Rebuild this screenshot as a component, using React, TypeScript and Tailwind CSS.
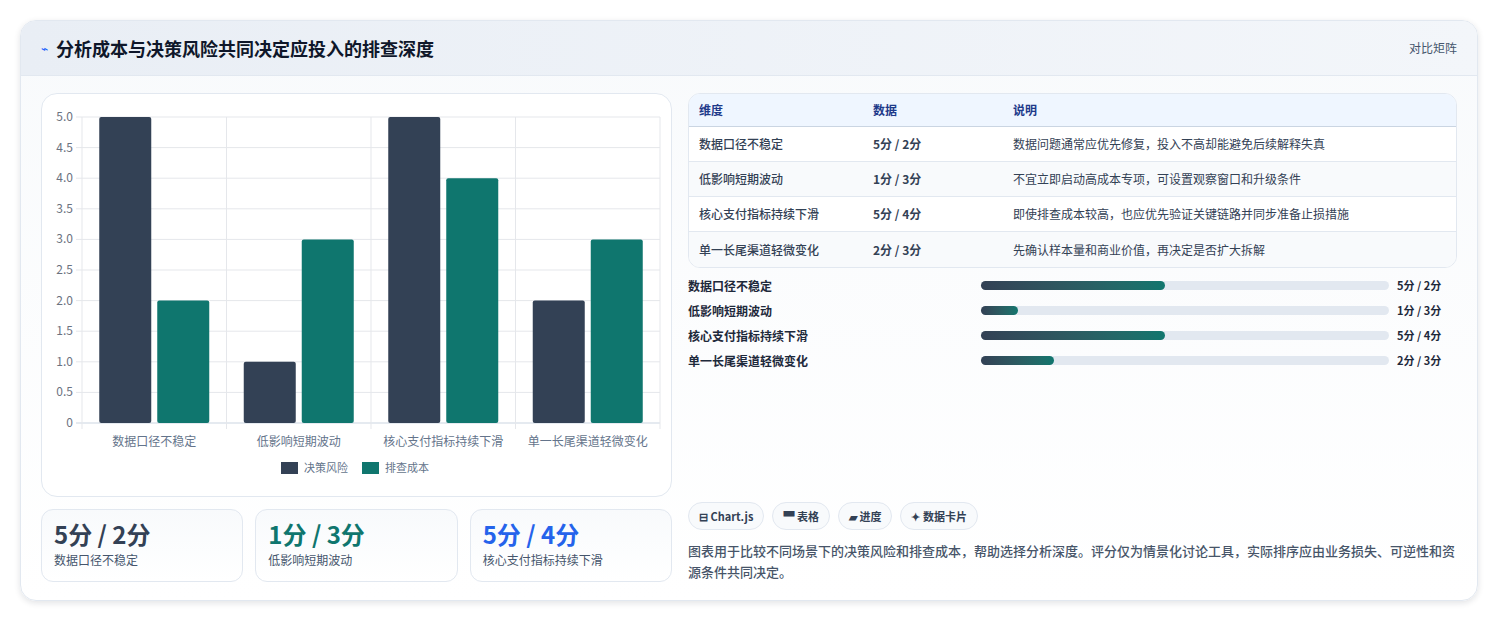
import React from "react";

const cats = ["数据口径不稳定", "低影响短期波动", "核心支付指标持续下滑", "单一长尾渠道轻微变化"];
const risk = [5, 1, 5, 2];
const cost = [2, 3, 4, 3];
const rows = [
  ["数据口径不稳定", "5分 / 2分", "数据问题通常应优先修复，投入不高却能避免后续解释失真"],
  ["低影响短期波动", "1分 / 3分", "不宜立即启动高成本专项，可设置观察窗口和升级条件"],
  ["核心支付指标持续下滑", "5分 / 4分", "即使排查成本较高，也应优先验证关键链路并同步准备止损措施"],
  ["单一长尾渠道轻微变化", "2分 / 3分", "先确认样本量和商业价值，再决定是否扩大拆解"],
];
const prog = [45, 9, 45, 18];

function Chart() {
  const L = 40, R = 618, T = 23, B = 329;
  const h = B - T;
  const cw = (R - L) / 4;
  const y = (v: number) => B - (v / 5) * h;
  return (
    <svg width="631" height="403" className="block" style={{ fontFamily: "'Noto Sans CJK SC', sans-serif" }}>
      {Array.from({ length: 11 }).map((_, i) => {
        const v = i * 0.5;
        return (
          <g key={i}>
            <line x1={L - 6} x2={R} y1={y(v)} y2={y(v)} stroke={i === 0 ? "#cbd5e1" : "#e5e7eb"} />
            <text x={L - 9} y={y(v) + 4} textAnchor="end" fontSize="12" fill="#6b7280">{i === 0 ? "0" : v.toFixed(1)}</text>
          </g>
        );
      })}
      {[0, 1, 2, 3, 4].map((i) => (
        <line key={i} x1={L + i * cw} x2={L + i * cw} y1={T} y2={B + 6} stroke="#e5e7eb" />
      ))}
      {cats.map((c, i) => {
        const cx = L + cw * i + cw / 2;
        return (
          <g key={c}>
            <rect x={cx - 55} y={y(risk[i])} width="52" height={B - y(risk[i])} rx="2" fill="#334155" />
            <rect x={cx + 3} y={y(cost[i])} width="52" height={B - y(cost[i])} rx="2" fill="#0f766e" />
            <text x={cx} y={B + 23} textAnchor="middle" fontSize="12" fill="#64748b">{c}</text>
          </g>
        );
      })}
      <rect x="239" y="368" width="17" height="12" fill="#334155" />
      <text x="262" y="378" fontSize="11" fill="#64748b">决策风险</text>
      <rect x="320" y="368" width="17" height="12" fill="#0f766e" />
      <text x="343" y="378" fontSize="11" fill="#64748b">排查成本</text>
    </svg>
  );
}

export default function App() {
  return (
    <div className="min-h-[621px] bg-white p-5 pb-5" style={{ fontFamily: "'Noto Sans CJK SC', 'Noto Sans', sans-serif" }}>
      <div className="rounded-2xl border border-slate-200 bg-gradient-to-b from-[#f8fafc] to-white shadow-[0_2px_6px_rgba(15,23,42,0.12)] overflow-hidden">
        <div className="h-[55px] flex items-center justify-between px-5 bg-gradient-to-r from-[#e9eef5] to-[#f3f6fa] border-b border-slate-200">
          <div className="flex items-center gap-2">
            <span className="text-blue-600 text-xs">⌁</span>
            <span className="text-[18px] font-bold text-[#0f172a]">分析成本与决策风险共同决定应投入的排查深度</span>
          </div>
          <span className="text-xs text-slate-600">对比矩阵</span>
        </div>
        <div className="flex gap-4 px-5 pt-[17px] pb-[18px]">
          <div className="w-[631px] flex flex-col gap-3">
            <div className="h-[404px] rounded-2xl border border-slate-200 bg-white"><Chart /></div>
            <div className="grid grid-cols-3 gap-3">
              {[["5分 / 2分", "数据口径不稳定", "text-[#334155]"], ["1分 / 3分", "低影响短期波动", "text-[#0f766e]"], ["5分 / 4分", "核心支付指标持续下滑", "text-[#2563eb]"]].map(([v, l, c]) => (
                <div key={l} className="h-[73px] rounded-xl border border-slate-200 bg-gradient-to-b from-[#f8fafc] to-white px-3 pt-2">
                  <div className={`text-[24px] font-bold leading-8 ${c}`}>{v}</div>
                  <div className="text-xs text-slate-600 mt-0.5">{l}</div>
                </div>
              ))}
            </div>
          </div>
          <div className="flex-1 flex flex-col">
            <div className="rounded-xl border border-slate-200 overflow-hidden bg-white text-xs">
              <div className="flex h-[33px] items-center bg-[#eff6ff] border-b border-slate-300 text-[#1e3a8a] font-semibold">
                <div className="w-[184px] pl-[10px]">维度</div><div className="w-[140px]">数据</div><div>说明</div>
              </div>
              {rows.map((r, i) => (
                <div key={i} className={`flex h-[35px] items-center text-[#334155] ${i < 3 ? "border-b border-slate-200" : ""} ${i % 2 ? "bg-[#f8fafc]" : ""}`}>
                  <div className="w-[184px] pl-[10px] font-medium">{r[0]}</div>
                  <div className="w-[140px] font-semibold">{r[1]}</div>
                  <div>{r[2]}</div>
                </div>
              ))}
            </div>
            <div className="flex flex-col gap-[10px] mt-[10px] text-xs font-semibold text-[#1e293b]">
              {rows.map((r, i) => (
                <div key={i} className="flex items-center h-[15px]">
                  <div className="w-[293px]">{r[0]}</div>
                  <div className="w-[408px] h-[9px] rounded-full bg-[#e2e8f0]">
                    <div className="h-full rounded-full bg-gradient-to-r from-[#334155] to-[#0f766e]" style={{ width: `${prog[i]}%` }} />
                  </div>
                  <div className="ml-2 text-[11px] font-bold">{r[1]}</div>
                </div>
              ))}
            </div>
            <div className="flex-1" />
            <div className="flex gap-2 text-[11px] font-semibold text-[#334155]">
              {["⊟ Chart.js", "▀ 表格", "▰ 进度", "✦ 数据卡片"].map((t) => (
                <span key={t} className="h-[28px] px-[10px] flex items-center rounded-full border border-slate-200 bg-[#f8fafc]">{t}</span>
              ))}
            </div>
            <p className="mt-[10px] text-[13px] leading-[21px] text-[#475569] font-medium">图表用于比较不同场景下的决策风险和排查成本，帮助选择分析深度。评分仅为情景化讨论工具，实际排序应由业务损失、可逆性和资源条件共同决定。</p>
          </div>
        </div>
      </div>
    </div>
  );
}
